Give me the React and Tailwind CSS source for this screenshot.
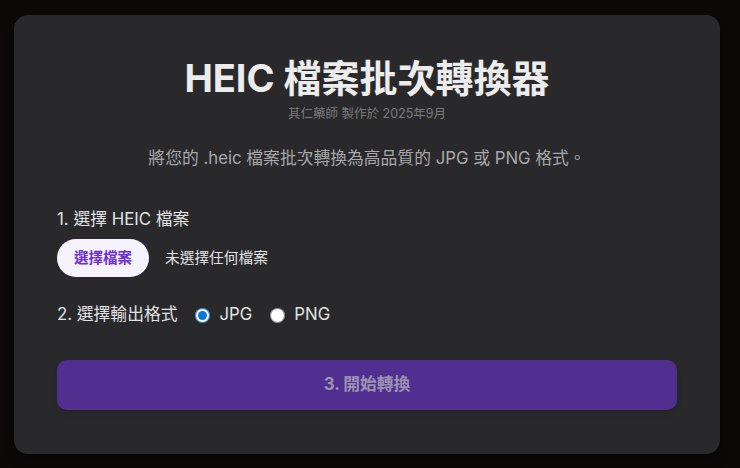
import React, { useState } from 'react';

const font = "font-['Inter','Noto_Sans_CJK_TC',sans-serif]";

const App = () => {
  const [format, setFormat] = useState('jpg');

  return (
    <div className={`min-h-screen bg-[#0b0807] px-[14px] pt-[15px] pb-[14px] ${font}`}>
      <div className="w-[706px] h-[439px] rounded-[14px] bg-[#29292b] px-[43px] pt-[41px] shadow-lg">
        {/* Header */}
        <h1 className="text-center text-[38px] leading-[44px] font-bold text-[#ececec]">
          HEIC 檔案批次轉換器
        </h1>
        <p className="text-center text-[12.5px] leading-4 text-[#7a7a7c] mt-[6px]">
          其仁藥師 製作於 2025年9月
        </p>
        <p className="text-center text-[16.8px] leading-6 text-[#a8a8ab] mt-[24px]">
          將您的 .heic 檔案批次轉換為高品質的 JPG 或 PNG 格式。
        </p>

        {/* Step 1 */}
        <div className="mt-[37px]">
          <div className="text-[16.8px] leading-6 text-[#e2e2e4]">1. 選擇 HEIC 檔案</div>
          <div className="mt-[8px] flex items-center gap-4">
            <button className="h-[38px] px-[17px] rounded-full bg-[#f6f2ff] text-[14.5px] font-semibold text-[#6d2fd3]">
              選擇檔案
            </button>
            <span className="text-[14.7px] text-[#e2e2e4]">未選擇任何檔案</span>
          </div>
        </div>

        {/* Step 2 */}
        <div className="mt-[26px] h-6 flex items-center text-[16.8px] text-[#e2e2e4]">
          <span>2. 選擇輸出格式</span>
          <label className="ml-[18px] flex items-center gap-[9px]">
            <input
              type="radio"
              name="fmt"
              checked={format === 'jpg'}
              onChange={() => setFormat('jpg')}
              className="w-[15px] h-[15px] accent-[#0a74da]"
            />
            JPG
          </label>
          <label className="ml-[18px] flex items-center gap-[9px]">
            <input
              type="radio"
              name="fmt"
              checked={format === 'png'}
              onChange={() => setFormat('png')}
              className="w-[15px] h-[15px] accent-[#0a74da]"
            />
            PNG
          </label>
        </div>

        {/* Convert */}
        <button
          disabled
          className="mt-[33px] w-full h-[50px] rounded-[10px] bg-[#512f91] text-[16.8px] font-bold text-[#9c93b3] shadow-md"
        >
          3. 開始轉換
        </button>
      </div>
    </div>
  );
};

export default App;
